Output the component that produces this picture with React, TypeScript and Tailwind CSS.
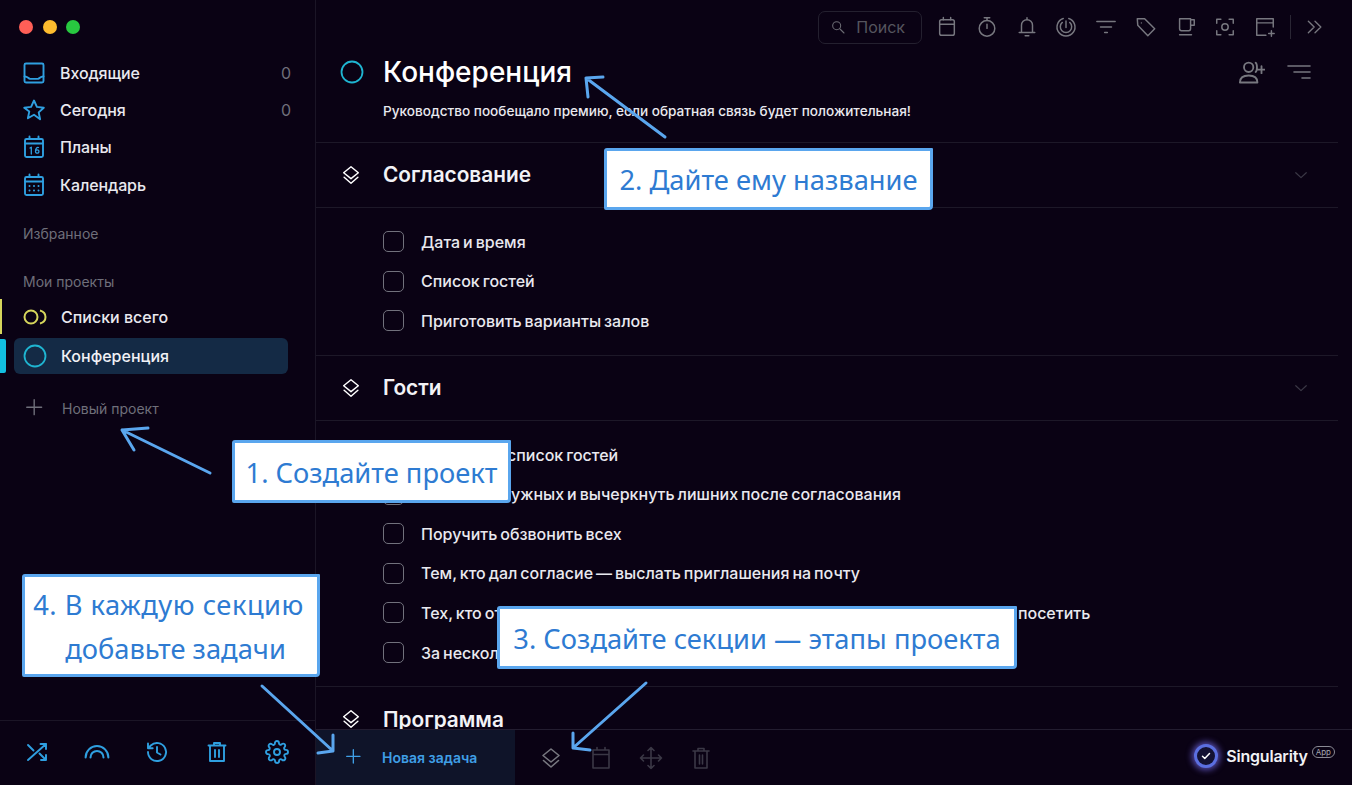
import React from "react";

type P = { className?: string; children?: React.ReactNode };
const I = ({ className = "", children, s = 24, w = 1.6 }: P & { s?: number; w?: number }) => (
  <svg width={s} height={s} viewBox="0 0 24 24" fill="none" stroke="currentColor" strokeWidth={w} strokeLinecap="round" strokeLinejoin="round" className={className}>
    {children}
  </svg>
);

const Inbox = () => (
  <I s={24} w={1.9} className="text-[#2f9fe0]">
    <rect x="2.5" y="2.5" width="19" height="19" rx="1.5" />
    <path d="M2.5 15.5c3-.4 3.6 2 5.5 2.4h8c1.900-.4 2.500-2.800 5.500-2.400" />
  </I>
);
const Star = () => (
  <I s={24} w={1.9} className="text-[#2f9fe0]">
    <path d="M12 2.500l2.900 6.400 6.900.8-5.100 4.700 1.400 6.900L12 16.800l-6.100 3.500 1.400-6.900L2.200 9.700l6.900-.8z" />
  </I>
);
const CalSixteen = () => (
  <I s={24} w={1.9} className="text-[#2f9fe0]">
    <rect x="3" y="4" width="18" height="18" rx="1.500" />
    <path d="M3 8.500h18M7.500 1.500V4M16.500 1.500V4" />
    <path d="M8 13l1.300-.8V19M13.500 16.500a1.700 1.700 0 1 0 3.400 0a1.700 1.700 0 1 0-3.400 0M16.500 12.500c-1.500-.5-3 .8-3 4" strokeWidth="1.300" />
  </I>
);
const CalDots = () => (
  <I s={24} w={1.9} className="text-[#2f9fe0]">
    <rect x="3" y="4" width="18" height="18" rx="1.500" />
    <path d="M3 8.500h18M7.500 1.500V4M16.500 1.500V4" />
    <path d="M7.500 13h.01M12 13h.01M16.500 13h.01M7.500 17.500h.01M12 17.500h.01M16.500 17.500h.01" strokeWidth="2" />
  </I>
);
const Layers = ({ className = "text-white", s = 22 }: { className?: string; s?: number }) => (
  <I s={s} className={className}>
    <path d="M12 3l8 6.500-8 6.500-8-6.500z" />
    <path d="M4.500 14.500L12 21l7.500-6.500" />
  </I>
);

const NavRow = ({ icon, label, count }: { icon: React.ReactNode; label: string; count?: string }) => (
  <div className="flex h-[37.400px] items-center pl-[22px] pr-[24px]">
    {icon}
    <span className="ml-[14px] flex-1 text-[16px] font-medium tracking-[-0.1px] text-[#e9e9ef]">{label}</span>
    {count && <span className="text-[16px] text-[#6f6f7a]">{count}</span>}
  </div>
);

const Sidebar = () => (
  <aside className="flex h-[785px] w-[316px] shrink-0 flex-col border-r border-[#1b1526]">
    <div className="flex h-[54px] items-center gap-[9.500px] pl-[19px]">
      <span className="h-[14px] w-[14px] rounded-full bg-[#ff5f57]" />
      <span className="h-[14px] w-[14px] rounded-full bg-[#febc2e]" />
      <span className="h-[14px] w-[14px] rounded-full bg-[#28c840]" />
    </div>
    <NavRow icon={<Inbox />} label="Входящие" count="0" />
    <NavRow icon={<Star />} label="Сегодня" count="0" />
    <NavRow icon={<CalSixteen />} label="Планы" />
    <NavRow icon={<CalDots />} label="Календарь" />
    <div className="mt-[20px] flex h-[20px] items-center pl-[23px] text-[14px] text-[#6f6f7a]">Избранное</div>
    <div className="mt-[28px] flex h-[20px] items-center pl-[23px] text-[14px] text-[#6f6f7a]">Мои проекты</div>
    <div className="mt-[7px] flex h-[36px] items-center">
      <span className="h-[35px] w-[2px] bg-[#d6d65c]" />
      <svg width="26" height="24" viewBox="0 0 26 24" fill="none" stroke="#d6d65c" strokeWidth="2" className="ml-[20px]">
        <circle cx="9" cy="12" r="6.500" />
        <path d="M18 5.500c3.500 1 5.500 3.500 5.500 6.500s-2 5.500-5.500 6.500" />
      </svg>
      <span className="ml-[13px] text-[16px] font-medium text-[#e9e9ef]">Списки всего</span>
    </div>
    <div className="mt-[3px] flex h-[36px] items-center">
      <span className="h-[34px] w-[6px] rounded-r-[2px] bg-[#12bfe0]" />
      <div className="ml-[8px] flex h-[36px] w-[274px] items-center rounded-[6px] bg-[#142a45] pl-[9px]">
        <svg width="24" height="24" viewBox="0 0 24 24" fill="none" stroke="#1fb5d1" strokeWidth="1.800">
          <circle cx="12" cy="12" r="10.500" />
        </svg>
        <span className="ml-[14px] text-[16px] font-medium text-[#f1f1f5]">Конференция</span>
      </div>
    </div>
    <div className="mt-[23px] flex h-[24px] items-center pl-[25px] text-[#6f6f7a]">
      <I s={21}><path d="M10.500 2v17M2 10.500h17" /></I>
      <span className="ml-[16px] text-[14px]">Новый проект</span>
    </div>
    <div className="flex-1" />
    <div className="flex h-[65px] items-center border-t border-[#1b1526] px-[7px] pb-[2px] text-[#2f9fe0]">
      <div className="flex w-[60px] justify-center">
        <I w={1.9}><path d="M3 5l5.500 5.500M14.500 13.500L21 20M21 15v5h-5M3 20L21 4M15.500 4H21v5" /></I>
      </div>
      <div className="flex w-[60px] justify-center">
        <I s={26} w={1.9}><path d="M1.500 19a10.500 10.500 0 0 1 21 0" transform="translate(0 -2)" /><path d="M6 18a6 6 0 0 1 12 0" transform="translate(0 -1)" /></I>
      </div>
      <div className="flex w-[60px] justify-center">
        <I w={1.9}><path d="M3 12a9 9 0 1 0 2.800-6.500L3 8.200M3 3.500v4.700h4.700M12 7v5.500l3.500 2" /></I>
      </div>
      <div className="flex w-[60px] justify-center">
        <I w={1.9}><path d="M3.500 5.500h17M9 5.500V3h6v2.500M5 5.500h14v15.500H5zM10 10v7M14 10v7" /></I>
      </div>
      <div className="flex w-[60px] justify-center">
        <I w={1.9}><circle cx="12" cy="12" r="3" /><path d="M19.400 15a1.650 1.650 0 0 0 .33 1.820l.06.06a2 2 0 1 1-2.830 2.830l-.06-.06a1.650 1.650 0 0 0-2.820 1.170V21a2 2 0 1 1-4 0v-.09a1.650 1.650 0 0 0-2.820-1.170l-.06.06a2 2 0 1 1-2.830-2.830l.06-.06a1.650 1.650 0 0 0-1.170-2.820H3a2 2 0 1 1 0-4h.09a1.650 1.650 0 0 0 1.170-2.820l-.06-.06a2 2 0 1 1 2.830-2.830l.06.06a1.650 1.650 0 0 0 2.820-1.170V3a2 2 0 1 1 4 0v.09a1.650 1.650 0 0 0 2.820 1.170l.06-.06a2 2 0 1 1 2.830 2.830l-.06.06a1.650 1.650 0 0 0 1.170 2.820H21a2 2 0 1 1 0 4h-.09a1.650 1.650 0 0 0-1.510 1z" /></I>
      </div>
    </div>
  </aside>
);

const Tool = ({ children }: P) => <div className="flex w-[39.750px] justify-center">{children}</div>;

const TopBar = () => (
  <div className="flex h-[54px] items-center justify-end pr-[24px] text-[#77777f]">
    <div className="mr-[5px] flex h-[33px] w-[104px] items-center rounded-[7px] border border-[#24202f] pl-[11px]">
      <I s={16} className="text-[#6c6c74]"><circle cx="10" cy="10" r="6" /><path d="M15 15l6 6" /></I>
      <span className="ml-[10px] text-[16px] text-[#55555e]">Поиск</span>
    </div>
    <Tool><I s={22}><rect x="4" y="4" width="16" height="17" rx="2" /><path d="M4 9h16M8 1.500V4M16 1.500V4" /></I></Tool>
    <Tool><I s={22}><circle cx="12" cy="13.500" r="8.500" /><path d="M9 2h6M12 2v3M12 9v4.500" /></I></Tool>
    <Tool><I s={22}><path d="M6 18V10a6 6 0 0 1 12 0v8M3.500 18h17M10 21.500h4M12 2v2" /></I></Tool>
    <Tool><I s={22}><path d="M15 2.700A9.800 9.800 0 1 1 9 2.700" /><path d="M16 7a6.200 6.200 0 1 1-8 0" /><path d="M12 5.500v7" /></I></Tool>
    <Tool><I s={22}><path d="M2 6h20M6 12h12M10.500 18h3" /></I></Tool>
    <Tool><I s={22}><path d="M2.500 3h8l11 11-7.500 7.500-11-11.500zM7 7.500h.01" /></I></Tool>
    <Tool><I s={22}><path d="M5 3h12v11a2 2 0 0 1-2 2H7a2 2 0 0 1-2-2zM17 4h4v6h-4M5 20.500h13" /></I></Tool>
    <Tool><I s={22}><path d="M3 8V3.500h4.500M16.500 3.500H21V8M21 16v4.500h-4.500M7.500 20.500H3V16" /><circle cx="12" cy="12" r="3.500" /></I></Tool>
    <Tool><I s={22}><path d="M21 12V3H3v18h10M3 7.500h18M19 16v6M16 19h6" /></I></Tool>
    <span className="ml-[5px] mr-[11px] h-[24px] w-px bg-[#2a2634]" />
    <I s={20} className="mx-[3px]"><path d="M4 5l7 7-7 7M12 5l7 7-7 7" /></I>
  </div>
);

const Section = ({ title, chevron = true }: { title: string; chevron?: boolean }) => (
  <div className="flex h-[65px] shrink-0 items-center border-b border-[#1d1828] pl-[24px] pr-[28px]">
    <Layers />
    <span className="ml-[21px] flex-1 text-[20.800px] font-semibold text-[#f2f2f6]">{title}</span>
    {chevron && <I s={18} className="text-[#3b3846]"><path d="M5 9l7 6.500L19 9" /></I>}
  </div>
);

const Task = ({ text }: { text: string }) => (
  <div className="flex h-[39.600px] items-center pl-[67px]">
    <span className="h-[21px] w-[21px] shrink-0 rounded-[5px] border-[1.500px] border-[#71717c]" />
    <span className="ml-[17px] whitespace-nowrap text-[16px] font-medium text-[#e9e9ef] [word-spacing:-1.300px]">{text}</span>
  </div>
);

const Callout = ({ className = "", children }: P) => (
  <div
    className={
      "absolute flex items-center justify-center whitespace-nowrap rounded-[3px_1px_4px_2px] border-[3px] border-[#5aa6ee] bg-white pt-[2px] text-center font-['Noto_Sans',sans-serif] text-[27.300px] font-normal leading-[44px] text-[#2e7bd2] " +
      className
    }
  >
    {children}
  </div>
);

export default function App() {
  return (
    <div className="relative flex h-[785px] w-[1352px] overflow-hidden bg-[#0a0214] font-['Inter',sans-serif]">
      <Sidebar />
      <main className="flex min-w-0 flex-1 flex-col">
        <TopBar />
        <div className="flex h-[88px] shrink-0 flex-col">
          <div className="flex h-[36px] items-center pl-[24px] pr-[41px]">
            <svg width="24" height="24" viewBox="0 0 24 24" fill="none" stroke="#1fb5d1" strokeWidth="1.800">
              <circle cx="12" cy="12" r="10.500" />
            </svg>
            <span className="ml-[19px] flex-1 text-[28px] font-medium text-white">Конференция</span>
            <I s={28} className="mr-[22px] text-[#77777f]"><circle cx="10" cy="8" r="4" /><path d="M2.500 21c0-4 2.500-6 7.500-6s7.500 2 7.500 6zM16 4c1.500 1 1.500 7 0 8M21 7v6M18 10h6" /></I>
            <I s={24} className="text-[#77777f]"><path d="M1 6h22M7 12h16M15 18h8" /></I>
          </div>
          <p className="ml-[67px] mt-[10px] text-[13.600px] font-medium leading-[22px] text-[#e9e9ef]">
            Руководство пообещало премию, если обратная связь будет положительная!
          </p>
        </div>
        <div className="mr-[14px] flex min-h-0 flex-1 flex-col overflow-hidden border-t border-[#1d1828]">
          <Section title="Согласование" />
          <div className="shrink-0 border-b border-[#1d1828] pb-[14px] pt-[14px]">
            <Task text="Дата и время" />
            <Task text="Список гостей" />
            <Task text="Приготовить варианты залов" />
          </div>
          <Section title="Гости" />
          <div className="shrink-0 border-b border-[#1d1828] pb-[14px] pt-[14px]">
            <Task text="Составить список гостей" />
            <Task text="Добавить нужных и вычеркнуть лишних после согласования" />
            <Task text="Поручить обзвонить всех" />
            <Task text="Тем, кто дал согласие — выслать приглашения на почту" />
            <Task text="Тех, кто отказались — спросить, что могло бы убедить их всё же приехать и посетить" />
            <Task text="За несколько дней напомнить" />
          </div>
          <Section title="Программа" chevron={false} />
        </div>
        <div className="flex h-[56px] shrink-0 items-center border-t border-[#231d30] bg-[#0a0214]">
          <div className="flex h-full w-[199px] items-center bg-[#0f1429] pl-[29px] text-[#3f9fe6]">
            <I s={20}><path d="M10 2v16M2 10h16" /></I>
            <span className="ml-[17px] text-[14px] font-semibold">Новая задача</span>
          </div>
          <div className="ml-[23px] flex items-center text-[#3b3846]">
            <div className="flex w-[26px] justify-center"><Layers className="text-[#77777f]" s={24} /></div>
            <div className="ml-[24px] flex w-[26px] justify-center"><I><path d="M4 4h16v18H4zM4 8.500h16M8 1.500V4M16 1.500V4" /></I></div>
            <div className="ml-[24px] flex w-[26px] justify-center"><I><path d="M12 1.500v21M1.500 12h21M9 4.500l3-3 3 3M9 19.500l3 3 3-3M4.500 9l-3 3 3 3M19.500 9l3 3-3 3" /></I></div>
            <div className="ml-[24px] flex w-[26px] justify-center"><I><path d="M4 5h16M9 5V2.500h6V5M6 5h12v17H6zM10.500 9v9M13.500 9v9" /></I></div>
          </div>
          <div className="ml-auto flex items-center pb-[3px] pr-[17px]">
            <span className="flex h-[24px] w-[24px] items-center justify-center rounded-full border-[3px] border-[#5b6fe0] bg-[#141233] shadow-[0_0_6px_2px_rgba(120,110,240,0.7)]">
              <I s={12} className="text-white"><path d="M5 12.500l4.500 4.500L19 7" strokeWidth="3" /></I>
            </span>
            <span className="ml-[8px] text-[16px] font-semibold tracking-[-0.2px] text-[#f1f1f5]">Singularity</span>
            <span className="mb-[8px] ml-[4px] rounded-full border border-[#8a8a94] px-[3px] text-[8px] leading-[10px] text-[#a5a5ae]">App</span>
          </div>
        </div>
      </main>

      <Callout className="left-[232px] top-[440px] h-[63px] w-[279px]">1. Создайте проект</Callout>
      <Callout className="left-[604px] top-[148px] h-[62px] w-[329px]">2. Дайте ему название</Callout>
      <Callout className="left-[497px] top-[606px] h-[63px] w-[520px]">3. Создайте секции — этапы проекта</Callout>
      <Callout className="left-[22px] top-[574px] h-[103px] w-[298px]">
        <div className="pr-[5px]">
          <span className="tracking-[0.5px]">4. В каждую секцию</span>
          <br />
          <span className="ml-[14px]">добавьте задачи</span>
        </div>
      </Callout>

      <svg className="pointer-events-none absolute left-0 top-0" width="1352" height="785" fill="none" stroke="#5aa6ee" strokeWidth="3" strokeLinecap="round" strokeLinejoin="round">
        <path d="M210 473L122 430M148 428L122 430L134 450" />
        <path d="M665 137L586 78M603 77L586 78L588 97" />
        <path d="M646 683L573 748M573 733L573 748L590 750" />
        <path d="M262 686L333 751M333 735L333 751L318 753" />
      </svg>
    </div>
  );
}
